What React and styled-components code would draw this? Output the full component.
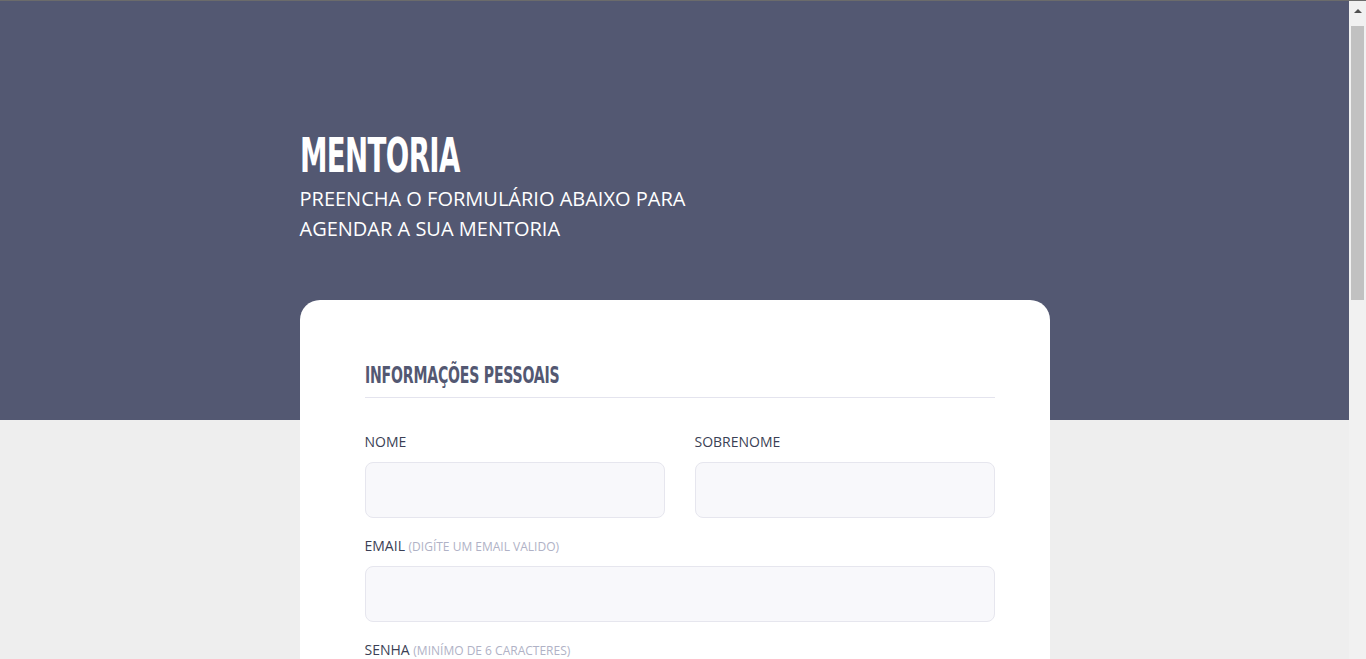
import React from 'react';
import styled, { createGlobalStyle } from 'styled-components';

const Global = createGlobalStyle`
  html, body {
    margin: 0;
    padding: 0;
  }
  body {
    background-color: #eeeeee;
    border-top: 1px solid #6b6b6b;
    padding-right: 17px;
    font-family: "Open Sans", "Noto Sans", sans-serif;
  }
`;

const Scrollbar = styled.div`
  position: fixed;
  top: 1px;
  right: 0;
  bottom: 0;
  width: 17px;
  background: #f1f1f1;
`;

const ScrollArrow = styled.div`
  margin: 8px auto 0;
  width: 0;
  height: 0;
  border-left: 4px solid transparent;
  border-right: 4px solid transparent;
  border-bottom: 4px solid #505050;
`;

const ScrollThumb = styled.div`
  margin: 13px 0 0 2px;
  width: 13px;
  height: 274px;
  background: #c1c1c1;
`;

const Hero = styled.header`
  background-color: #535872;
  padding: 131px 0 176px;
`;

const Wrap = styled.div`
  width: 750px;
  margin: 0 auto;
`;

const Condensed = styled.span`
  display: inline-block;
  transform: scaleX(${p => p.$scale});
  transform-origin: left center;
  white-space: nowrap;
`;

const Title = styled.h1`
  margin: 0;
  font-family: "DejaVu Sans", sans-serif;
  font-stretch: condensed;
  font-weight: 700;
  font-size: 48px;
  line-height: 46px;
  letter-spacing: -1px;
  color: #ffffff;
  text-transform: uppercase;
`;

const Subtitle = styled.p`
  margin: 6px 0 0;
  max-width: 420px;
  font-size: 20px;
  line-height: 30px;
  color: #ffffff;
  text-transform: uppercase;
`;

const Card = styled.section`
  width: 750px;
  margin: -120px auto 0;
  box-sizing: border-box;
  background: #ffffff;
  border-radius: 20px 20px 0 0;
  padding: 62px 55px 60px 65px;
`;

const SectionTitle = styled.h2`
  margin: 0;
  padding-bottom: 9px;
  border-bottom: 1px solid #e4e4ee;
  font-family: "DejaVu Sans", sans-serif;
  font-stretch: condensed;
  font-weight: 700;
  font-size: 23px;
  line-height: 26px;
  letter-spacing: -0.3px;
  color: #535872;
  text-transform: uppercase;
`;

const Grid = styled.div`
  display: grid;
  grid-template-columns: 1fr 1fr;
  column-gap: 30px;
  row-gap: 18px;
  margin-top: 34px;
`;

const Field = styled.div`
  grid-column: ${p => (p.$full ? '1 / -1' : 'auto')};
  display: flex;
  flex-direction: column;
`;

const Label = styled.label`
  display: block;
  height: 20px;
  font-size: 14px;
  line-height: 20px;
  color: #3b3f55;
  text-transform: uppercase;
  margin-bottom: 10px;
`;

const Hint = styled.span`
  font-size: 12px;
  line-height: 12px;
  color: #b0b2c6;
`;

const Input = styled.input`
  height: 56px;
  box-sizing: border-box;
  background: #f8f8fb;
  border: 1px solid #e6e6ee;
  border-radius: 8px;
  padding: 0 16px;
  font-size: 15px;
  outline: none;
`;

export default function App() {
  return (
    <>
      <Global />
      <Scrollbar>
        <ScrollArrow />
        <ScrollThumb />
      </Scrollbar>
      <Hero>
        <Wrap>
          <Title>
            <Condensed $scale={0.64}>Mentoria</Condensed>
          </Title>
          <Subtitle>Preencha o formulário abaixo para agendar a sua mentoria</Subtitle>
        </Wrap>
      </Hero>
      <Card>
        <SectionTitle>
          <Condensed $scale={0.68}>Informações pessoais</Condensed>
        </SectionTitle>
        <Grid>
          <Field>
            <Label>Nome</Label>
            <Input type="text" />
          </Field>
          <Field>
            <Label>Sobrenome</Label>
            <Input type="text" />
          </Field>
          <Field $full>
            <Label>
              Email <Hint>(digíte um email valido)</Hint>
            </Label>
            <Input type="email" />
          </Field>
          <Field $full>
            <Label>
              Senha <Hint>(minímo de 6 caracteres)</Hint>
            </Label>
            <Input type="password" />
          </Field>
          <Field $full>
            <Label>Confirmar senha</Label>
            <Input type="password" />
          </Field>
        </Grid>
      </Card>
    </>
  );
}
